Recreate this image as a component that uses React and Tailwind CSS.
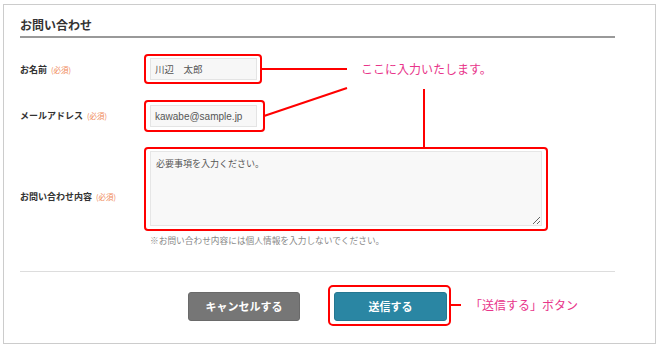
import React from "react";

const Req = () => (
  <span className="text-[7.5px] text-[#f08a5a] ml-[4px] font-normal">(必須)</span>
);

export default function App() {
  return (
    <div className="w-[670px] h-[350px] bg-white relative overflow-hidden pt-[4px] pl-[3px] font-['Noto_Sans_CJK_JP',sans-serif]">
      <div className="w-[653px] h-[340px] border border-[#cccccc] pl-[16px] pr-[40px] pt-[10px] flex flex-col">
        <div className="h-[23px] flex items-center border-b-2 border-[#999999] text-[12px] font-bold text-[#333333] leading-none pb-[2px]">
          お問い合わせ
        </div>

        <div className="mt-[16px] flex items-center">
          <div className="w-[124px] text-[9px] font-bold text-[#333333] pt-[2px]">
            お名前<Req />
          </div>
          <div className="border-2 border-[#ff0000] rounded-[4px] pt-[2px] pb-[2px] pl-[4px] pr-[3px]">
            <input
              readOnly
              defaultValue="川辺　太郎"
              className="block w-[107px] h-[22px] bg-[#f7f7f7] border border-[#e4e4e4] text-[9.5px] text-[#555555] pl-[4px] outline-none"
            />
          </div>
        </div>

        <div className="mt-[16px] flex items-center">
          <div className="w-[124px] text-[9px] font-bold text-[#333333]">
            メールアドレス<Req />
          </div>
          <div className="border-2 border-[#ff0000] rounded-[4px] pt-[3px] pb-[3px] pl-[4px] pr-[6px]">
            <input
              readOnly
              defaultValue="kawabe@sample.jp"
              className="block w-[107px] h-[22px] bg-[#f7f7f7] border border-[#e4e4e4] text-[10px] text-[#555555] pl-[4px] outline-none font-['Liberation_Sans',sans-serif]"
            />
          </div>
        </div>

        <div className="mt-[15px] flex items-center">
          <div className="w-[124px] text-[9px] font-bold text-[#333333]">
            お問い合わせ内容<Req />
          </div>
          <div className="flex flex-col">
            <div className="border-2 border-[#ff0000] rounded-[4px] pt-[2px] pb-[3px] pl-[4px] pr-[4px]">
              <textarea
                readOnly
                placeholder="必要事項を入力ください。"
                className="block w-[392px] h-[75px] bg-[#f8f8f8] border border-[#e6e6e6] text-[9px] text-[#555555] placeholder:text-[#555555] px-[5px] py-[5px] outline-none"
              />
            </div>
            <div className="mt-[3px] pl-[6px] text-[8.7px] leading-[13px] text-[#888888]">
              ※お問い合わせ内容には個人情報を入力しないでください。
            </div>
          </div>
        </div>

        <div className="mt-[24px] h-px bg-[#dddddd]" />

        <div className="mt-[13px] flex items-center pl-[168px]">
          <div className="w-[112px] h-[29px] mt-[2px] rounded-[3px] bg-[#767676] border border-[#6a6a6a] flex items-center justify-center text-white text-[11px] font-bold">
            キャンセルする
          </div>
          <div className="ml-[28px] border-2 border-[#ff0000] rounded-[5px] pt-[5px] pb-[3px] pl-[4px] pr-[2px]">
            <div className="w-[113px] h-[29px] rounded-[3px] bg-[#2a86a3] border border-[#247791] flex items-center justify-center text-white text-[11px] font-bold">
              送信する
            </div>
          </div>
        </div>
      </div>

      <svg className="absolute left-0 top-0 pointer-events-none" width="670" height="350">
        <line x1="261" y1="69" x2="347" y2="69" stroke="#ff0000" strokeWidth="2" />
        <line x1="264" y1="116" x2="347" y2="88" stroke="#ff0000" strokeWidth="2" />
        <line x1="424" y1="89" x2="424" y2="147" stroke="#ff0000" strokeWidth="2" />
        <line x1="450" y1="305" x2="461" y2="305" stroke="#ff0000" strokeWidth="2" />
      </svg>

      <div className="absolute left-[361px] top-[60px] text-[12px] leading-[17px] text-[#e8358a]">
        ここに入力いたします。
      </div>
      <div className="absolute left-[470px] top-[296px] text-[12px] leading-[17px] text-[#e8358a]">
        「送信する」ボタン
      </div>
    </div>
  );
}
